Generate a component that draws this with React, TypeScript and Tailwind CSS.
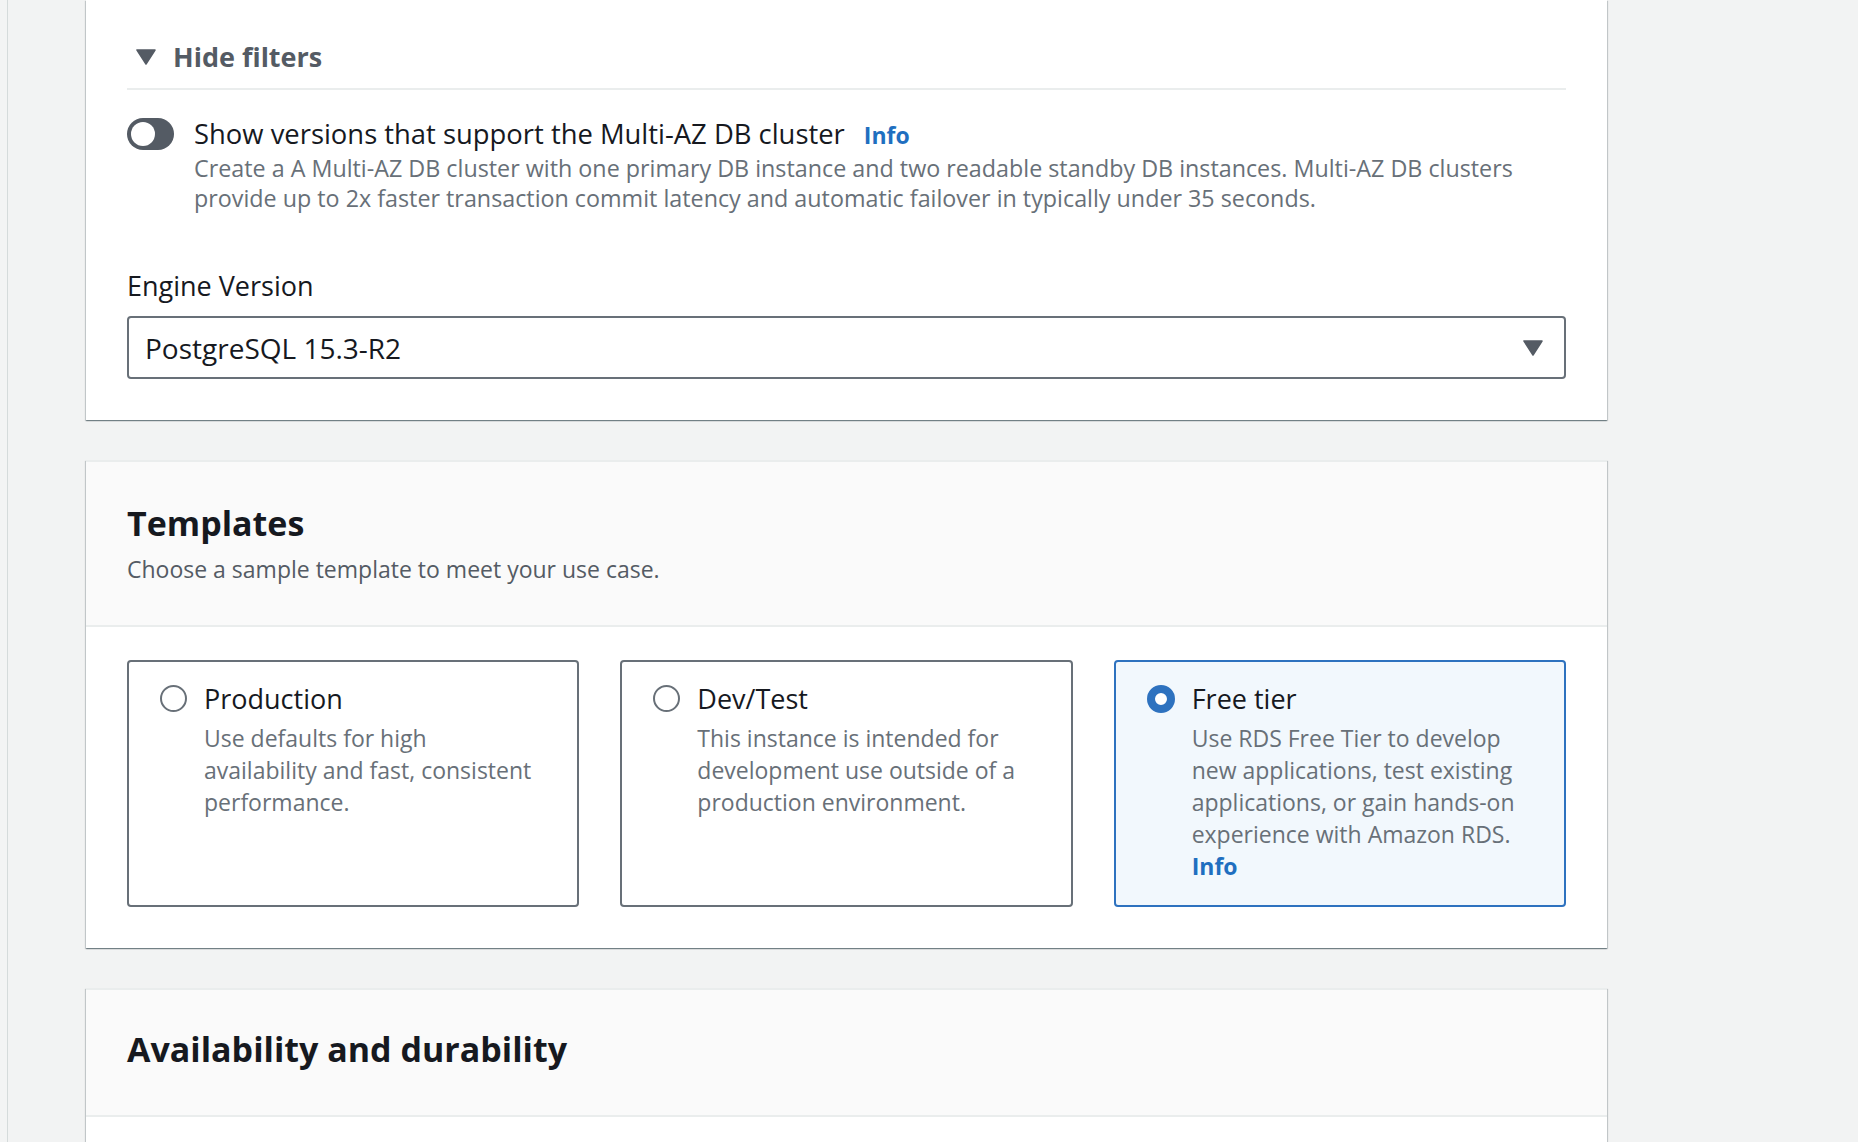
import React from 'react';

const font = { fontFamily: '"Open Sans", "Noto Sans", Arial, sans-serif' };

const Caret = ({ className }: { className?: string }) => (
    <svg className={className} viewBox="0 0 20 16" width="20" height="16">
        <path d="M1 1 H19 L10 15 Z" fill="#545b64" stroke="#545b64" strokeWidth="1.5" strokeLinejoin="round" />
    </svg>
);

const Radio = ({ checked }: { checked?: boolean }) =>
    checked ? (
        <span className="mt-[4px] shrink-0 w-[28px] h-[28px] rounded-full border-[8px] border-[#2e72bf] bg-white" />
    ) : (
        <span className="mt-[4px] shrink-0 w-[27px] h-[27px] rounded-full border-2 border-[#687078] bg-white" />
    );

type Tpl = { title: string; desc: string; selected?: boolean; info?: boolean };

const templates: Tpl[] = [
    { title: 'Production', desc: 'Use defaults for high availability and fast, consistent performance.' },
    { title: 'Dev/Test', desc: 'This instance is intended for development use outside of a production environment.' },
    {
        title: 'Free tier',
        desc: 'Use RDS Free Tier to develop new applications, test existing applications, or gain hands-on experience with Amazon RDS.',
        selected: true,
        info: true,
    },
];

const TemplateCard = ({ t }: { t: Tpl }) => (
    <div
        className={
            t.selected
                ? 'h-[247px] rounded-[4px] border-2 border-[#2e72bf] bg-[#f2f8fd] pl-[31px] pr-[34px] pt-[19px] flex gap-[17px]'
                : 'h-[247px] rounded-[4px] border-2 border-[#687078] bg-white pl-[31px] pr-[34px] pt-[19px] flex gap-[17px]'
        }
    >
        <Radio checked={t.selected} />
        <div className="flex flex-col">
            <div className="text-[27px] leading-[36px] text-[#16191f]">{t.title}</div>
            <div className="mt-[5px] text-[23px] leading-[32px] text-[#687078]">
                {t.desc}
                {t.info && <div className="font-bold text-[#1f6fc0]">Info</div>}
            </div>
        </div>
    </div>
);

const shadow =
    'shadow-[0_1px_1px_0_rgba(0,28,36,0.35),1px_1px_1px_0_rgba(0,28,36,0.15),-1px_1px_1px_0_rgba(0,28,36,0.15)]';

export default function App() {
    return (
        <div className="min-h-screen w-full bg-[#f2f3f3] flex overflow-hidden" style={font}>
            <div className="w-[8px] shrink-0 border-r border-[#d5dbdb] bg-[#f3f4f4]" />
            <main className="pl-[78px] flex flex-col gap-[40px]">
                {/* engine filters panel (scrolled, top is off screen) */}
                <section className={`w-[1521px] bg-white px-[41px] pt-[38px] pb-[41px] ${shadow}`}>
                    <div className="flex items-center gap-[17px] pl-[9px] pb-[12px] border-b-2 border-[#eaeded]">
                        <Caret />
                        <span className="text-[27px] leading-[38px] font-bold text-[#545b64]">Hide filters</span>
                    </div>
                    <div className="mt-[28px] flex gap-[20px]">
                        <div className="shrink-0 w-[47px] h-[32px] rounded-full bg-[#545b64] p-[4px]">
                            <div className="w-[24px] h-[24px] rounded-full bg-white" />
                        </div>
                        <div className="-mt-[2px]">
                            <div className="text-[27.4px] leading-[36px] text-[#16191f]">
                                Show versions that support the Multi-AZ DB cluster
                                <span className="ml-[19px] text-[23px] font-bold text-[#1f6fc0]">Info</span>
                            </div>
                            <p className="text-[23.3px] leading-[30px] text-[#687078] pr-[40px]">
                                Create a A Multi-AZ DB cluster with one primary DB instance and two readable standby DB instances. Multi-AZ DB clusters provide up to 2x faster transaction commit latency and automatic failover in typically under 35 seconds.
                            </p>
                        </div>
                    </div>
                    <div className="mt-[55px] text-[27px] leading-[36px] text-[#16191f]">Engine Version</div>
                    <div className="mt-[12px] h-[63px] rounded-[4px] border-2 border-[#687078] pl-[16px] pr-[21px] flex items-center justify-between">
                        <span className="text-[28px] text-[#16191f]">PostgreSQL 15.3-R2</span>
                        <Caret />
                    </div>
                </section>

                {/* templates */}
                <section className={`w-[1521px] bg-white border-t-2 border-[#eaeded] ${shadow}`}>
                    <header className="bg-[#fafafa] px-[41px] pt-[39px] pb-[40px] border-b-2 border-[#eaeded]">
                        <h2 className="text-[34px] leading-[44px] font-bold text-[#16191f]">Templates</h2>
                        <p className="mt-[8px] text-[23px] leading-[32px] text-[#545b64]">Choose a sample template to meet your use case.</p>
                    </header>
                    <div className="px-[41px] pt-[33px] pb-[41px] grid grid-cols-3 gap-[41px]">
                        {templates.map((t) => (
                            <TemplateCard key={t.title} t={t} />
                        ))}
                    </div>
                </section>

                {/* availability */}
                <section className={`w-[1521px] bg-white border-t-2 border-[#eaeded] ${shadow}`}>
                    <header className="bg-[#fafafa] px-[41px] pt-[37px] pb-[44px] border-b-2 border-[#eaeded]">
                        <h2 className="text-[34px] leading-[44px] font-bold text-[#16191f]">Availability and durability</h2>
                    </header>
                    <div className="h-[200px]" />
                </section>
            </main>
        </div>
    );
}
